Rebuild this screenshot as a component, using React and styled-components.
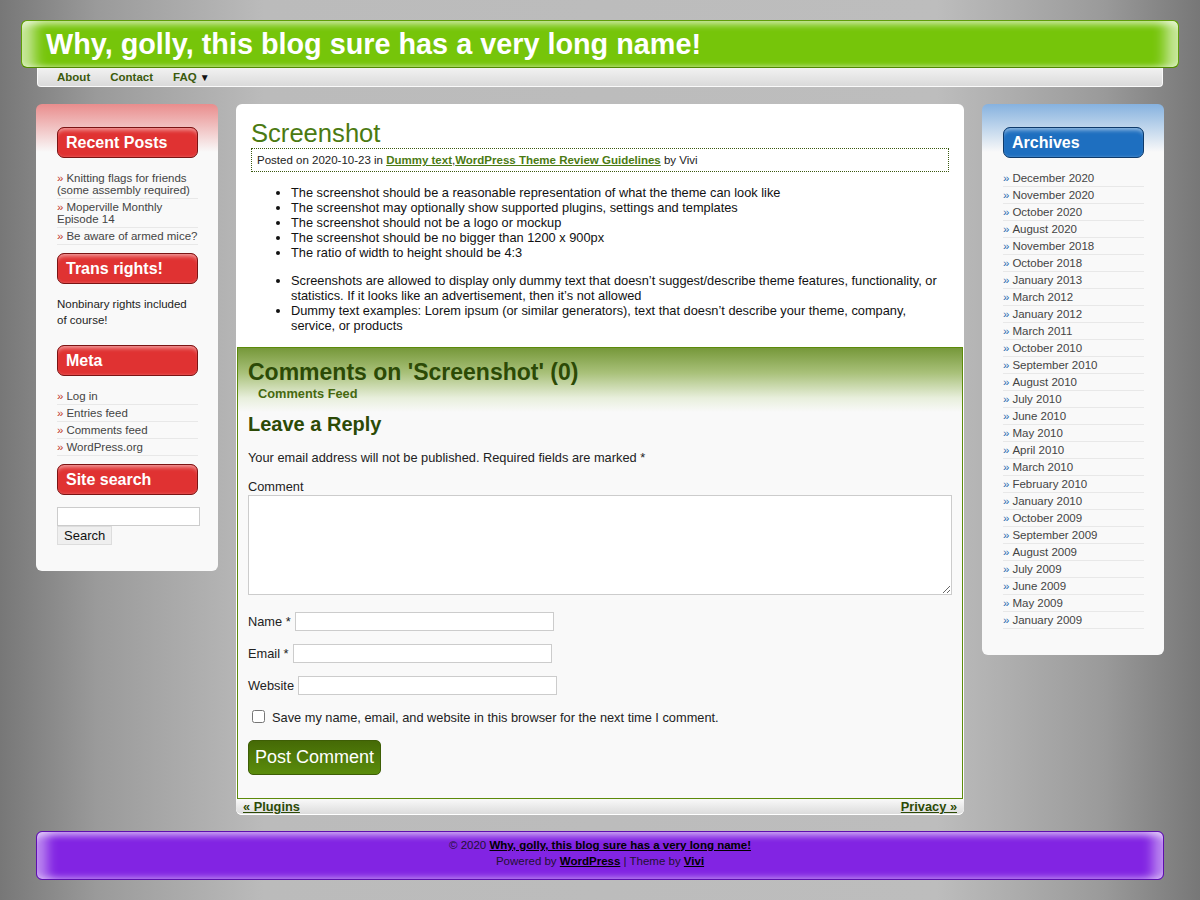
import React from "react";
import styled, { createGlobalStyle } from "styled-components";

const Global = createGlobalStyle`
  html, body { margin: 0; padding: 0; }
  body {
    font-family: "Liberation Sans", Arial, sans-serif;
    background: linear-gradient(to right, #777 0%, #9a9a9a 8%, #bbb 22%, #bdbdbd 78%, #9a9a9a 92%, #777 100%);
    min-height: 900px;
  }
`;

const Page = styled.div`
  width: 1128px;
  margin: 0 auto;
  padding-top: 20px;
`;

const Header = styled.header`
  margin: 0 -15px;
  height: 46px;
  background: #76c50a;
  border: 1px solid #5f9f08;
  border-bottom-color: #4f8a00;
  border-radius: 6px;
  box-shadow: inset 0 8px 6px -4px rgba(255,255,255,.55), inset 0 -4px 5px -3px rgba(255,255,255,.45),
    inset 22px 0 14px -10px rgba(255,255,255,.6), inset -22px 0 14px -10px rgba(255,255,255,.6);
  display: flex;
  align-items: center;
  padding-left: 24px;
`;

const SiteTitle = styled.h1`
  margin: 0;
  font-size: 28.8px;
  font-weight: bold;
  color: #fff;
`;

const Nav = styled.nav`
  margin: 0 1px;
  height: 19px;
  box-sizing: border-box;
  padding-bottom: 1px;
  background: linear-gradient(#f2f2f2, #dadada);
  border: 1px solid #fafafa;
  border-top: none;
  border-radius: 0 0 4px 4px;
  display: flex;
  align-items: center;
  gap: 20px;
  padding-left: 19px;
`;

const NavLink = styled.a`
  font-size: 11.5px;
  font-weight: bold;
  color: #3b5a0c;
  text-decoration: none;
`;

const Caret = styled.span`
  color: #111;
  font-size: 10px;
  margin-left: 3px;
`;

const Columns = styled.div`
  display: flex;
  align-items: flex-start;
  gap: 18px;
  margin-top: 17px;
`;

const Sidebar = styled.aside`
  width: 141px;
  padding: 23px 20px 18px 21px;
  border-radius: 6px;
  background: linear-gradient(${p => p.$tint} 0px, #f9f9f9 48px, #f9f9f9 100%);
`;

const Widget = styled.section`
  margin-bottom: 8px;
`;

const WidgetTitle = styled.h2`
  margin: 0 0 12px;
  height: 29px;
  line-height: 29px;
  padding-left: 8px;
  font-size: 16px;
  font-weight: bold;
  color: #fff;
  border-radius: 7px;
  border: 1px solid ${p => p.$dark};
  background: ${p => p.$color};
  box-shadow: inset 0 5px 4px -3px rgba(255,255,255,.55), inset 0 -2px 3px -2px rgba(255,255,255,.3);
`;

const List = styled.ul`
  list-style: none;
  margin: 0;
  padding: 0;
`;

const Item = styled.li`
  font-size: 11.5px;
  line-height: 12px;
  padding: 2px 0;
  border-bottom: 1px solid #e8e8e8;
  color: #444;
  &::before {
    content: "»";
    color: ${p => p.$mark};
    margin-right: 3px;
  }
`;

const Text = styled.p`
  margin: 0 0 17px;
  font-size: 11.5px;
  line-height: 16px;
  color: #222;
`;

const SearchForm = styled.form`
  display: flex;
  flex-direction: column;
  align-items: flex-start;
`;

const SearchInput = styled.input`
  box-sizing: border-box;
  width: 143px;
  height: 19px;
  border: 1px solid #ccc;
  background: #fff;
  margin: 0;
`;

const SearchButton = styled.button`
  font-family: "Liberation Sans", Arial, sans-serif;
  font-size: 13px;
  height: 19px;
  padding: 0 6px;
  background: #efefef;
  border: 1px solid #ddd;
  color: #111;
`;

const Main = styled.main`
  width: 728px;
  background: #fff;
  border-radius: 6px;
`;

const Post = styled.article`
  padding: 14px 15px 1px;
`;

const PostTitle = styled.h2`
  margin: 0;
  font-size: 25.6px;
  line-height: 30px;
  font-weight: normal;
  color: #4b7a12;
`;

const Meta = styled.div`
  border: 1px dotted #3a5a10;
  padding: 4px 5px;
  font-size: 11.5px;
  line-height: 14px;
  color: #222;
`;

const MetaLink = styled.a`
  font-weight: bold;
  color: #4b7a12;
  text-decoration: underline;
`;

const Bullets = styled.ul`
  margin: 13px 0;
  padding-left: 40px;
  font-size: 12.8px;
  line-height: 15px;
  color: #111;
`;

const Comments = styled.section`
  margin: 0 1px;
  border: 1px solid #5c8a0a;
  background: linear-gradient(#76983a 0px, #a9c17a 25px, #e8efdc 50px, #f9f9f9 64px, #f9f9f9 100%);
  padding: 10px 10px 23px;
`;

const CommentsTitle = styled.h2`
  margin: 0;
  font-size: 23px;
  line-height: 28px;
  font-weight: bold;
  color: #2c4a06;
`;

const FeedLink = styled.a`
  display: block;
  margin-left: 10px;
  font-size: 12.8px;
  font-weight: bold;
  color: #46690f;
  line-height: 16px;
  text-decoration: none;
`;

const ReplyTitle = styled.h3`
  margin: 9px 0 0;
  font-size: 20px;
  line-height: 26px;
  font-weight: bold;
  color: #2c4a06;
`;

const Para = styled.p`
  margin: 13px 0 0;
  font-size: 12.8px;
  line-height: 16px;
  color: #222;
`;

const CommentBlock = styled.div`
  margin-top: 13px;
`;

const Label = styled.label`
  display: block;
  font-size: 12.8px;
  line-height: 16px;
  color: #222;
`;

const TextArea = styled.textarea`
  display: block;
  box-sizing: border-box;
  width: 704px;
  height: 100px;
  border: 1px solid #ccc;
  background: #fff;
  margin: 0;
  resize: vertical;
`;

const Field = styled.div`
  display: flex;
  align-items: center;
  gap: 4px;
  margin-top: ${p => p.$top}px;
  font-size: 12.8px;
  color: #222;
`;

const TextInput = styled.input`
  box-sizing: border-box;
  width: 259px;
  height: 19px;
  border: 1px solid #ccc;
  background: #fff;
  margin: 0;
`;

const CheckRow = styled.div`
  display: flex;
  align-items: center;
  margin-top: 15px;
  font-size: 12.8px;
  color: #222;
`;

const Check = styled.input`
  margin: 0 7px 2px 4px;
  width: 13px;
  height: 13px;
`;

const PostButton = styled.button`
  margin-top: 15px;
  font-family: "Liberation Sans", Arial, sans-serif;
  font-size: 18px;
  color: #fff;
  height: 35px;
  padding: 0 6px;
  border: 1px solid #3e5e06;
  border-radius: 5px;
  background: linear-gradient(#456a06, #5a8c0c);
`;

const PostNav = styled.div`
  display: flex;
  justify-content: space-between;
  padding: 0 7px;
  height: 15px;
  line-height: 15px;
  background: linear-gradient(#f9f9f9, #dcdcdc);
  border-radius: 0 0 6px 6px;
  border-bottom: 1px solid #fff;
`;

const NavPostLink = styled.a`
  font-size: 12.8px;
  font-weight: bold;
  color: #2c4a06;
  text-decoration: underline;
`;

const Footer = styled.footer`
  margin-top: 16px;
  height: 47px;
  background: #8224e3;
  border: 1px solid #5e0fae;
  border-radius: 6px;
  box-shadow: inset 0 8px 6px -4px rgba(255,255,255,.55), inset 0 -6px 6px -4px rgba(255,255,255,.4),
    inset 18px 0 12px -8px rgba(255,255,255,.45), inset -18px 0 12px -8px rgba(255,255,255,.45);
  display: flex;
  flex-direction: column;
  align-items: center;
  justify-content: flex-start;
  font-size: 11.5px;
  line-height: 16px;
  color: #221133;
`;

const FooterLine = styled.div`
  &:first-child { margin-top: 5px; }
`;

const FootLink = styled.a`
  font-weight: bold;
  color: #000;
  text-decoration: underline;
`;

const recent = [
  "Knitting flags for friends (some assembly required)",
  "Moperville Monthly Episode 14",
  "Be aware of armed mice?",
];
const meta = ["Log in", "Entries feed", "Comments feed", "WordPress.org"];
const archives = [
  "December 2020", "November 2020", "October 2020", "August 2020", "November 2018",
  "October 2018", "January 2013", "March 2012", "January 2012", "March 2011",
  "October 2010", "September 2010", "August 2010", "July 2010", "June 2010",
  "May 2010", "April 2010", "March 2010", "February 2010", "January 2010",
  "October 2009", "September 2009", "August 2009", "July 2009", "June 2009",
  "May 2009", "January 2009",
];

const red = { $color: "#e03232", $dark: "#7a1414" };

export default function App() {
  return (
    <>
      <Global />
      <Page>
        <Header>
          <SiteTitle>Why, golly, this blog sure has a very long name!</SiteTitle>
        </Header>
        <Nav>
          <NavLink href="#">About</NavLink>
          <NavLink href="#">Contact</NavLink>
          <NavLink href="#">FAQ<Caret>▼</Caret></NavLink>
        </Nav>
        <Columns>
          <Sidebar $tint="#e98d8d">
            <Widget>
              <WidgetTitle {...red}>Recent Posts</WidgetTitle>
              <List>
                {recent.map(r => <Item key={r} $mark="#c0392b">{r}</Item>)}
              </List>
            </Widget>
            <Widget>
              <WidgetTitle {...red}>Trans rights!</WidgetTitle>
              <Text>Nonbinary rights included of course!</Text>
            </Widget>
            <Widget>
              <WidgetTitle {...red}>Meta</WidgetTitle>
              <List>
                {meta.map(r => <Item key={r} $mark="#c0392b">{r}</Item>)}
              </List>
            </Widget>
            <Widget>
              <WidgetTitle {...red}>Site search</WidgetTitle>
              <SearchForm onSubmit={e => e.preventDefault()}>
                <SearchInput type="text" />
                <SearchButton type="submit">Search</SearchButton>
              </SearchForm>
            </Widget>
          </Sidebar>

          <Main>
            <Post>
              <PostTitle>Screenshot</PostTitle>
              <Meta>
                Posted on 2020-10-23 in <MetaLink href="#">Dummy text</MetaLink>,<MetaLink href="#">WordPress Theme Review Guidelines</MetaLink> by Vivi
              </Meta>
              <Bullets>
                <li>The screenshot should be a reasonable representation of what the theme can look like</li>
                <li>The screenshot may optionally show supported plugins, settings and templates</li>
                <li>The screenshot should not be a logo or mockup</li>
                <li>The screenshot should be no bigger than 1200 x 900px</li>
                <li>The ratio of width to height should be 4:3</li>
              </Bullets>
              <Bullets>
                <li>Screenshots are allowed to display only dummy text that doesn’t suggest/describe theme features, functionality, or statistics. If it looks like an advertisement, then it’s not allowed</li>
                <li>Dummy text examples: Lorem ipsum (or similar generators), text that doesn’t describe your theme, company, service, or products</li>
              </Bullets>
            </Post>
            <Comments>
              <CommentsTitle>Comments on 'Screenshot' (0)</CommentsTitle>
              <FeedLink href="#">Comments Feed</FeedLink>
              <ReplyTitle>Leave a Reply</ReplyTitle>
              <Para>Your email address will not be published. Required fields are marked *</Para>
              <CommentBlock>
                <Label>Comment</Label>
                <TextArea />
              </CommentBlock>
              <Field $top={17}>Name *<TextInput type="text" /></Field>
              <Field $top={13}>Email *<TextInput type="text" /></Field>
              <Field $top={13}>Website<TextInput type="text" /></Field>
              <CheckRow>
                <Check type="checkbox" />
                Save my name, email, and website in this browser for the next time I comment.
              </CheckRow>
              <PostButton type="button">Post Comment</PostButton>
            </Comments>
            <PostNav>
              <NavPostLink href="#">« Plugins</NavPostLink>
              <NavPostLink href="#">Privacy »</NavPostLink>
            </PostNav>
          </Main>

          <Sidebar $tint="#86b2df">
            <Widget>
              <WidgetTitle $color="#1e6fc0" $dark="#0e3a6a">Archives</WidgetTitle>
              <List>
                {archives.map(r => <Item key={r} $mark="#2a6bb0">{r}</Item>)}
              </List>
            </Widget>
          </Sidebar>
        </Columns>
        <Footer>
          <FooterLine>© 2020 <FootLink href="#">Why, golly, this blog sure has a very long name!</FootLink></FooterLine>
          <FooterLine>Powered by <FootLink href="#">WordPress</FootLink> | Theme by <FootLink href="#">Vivi</FootLink></FooterLine>
        </Footer>
      </Page>
    </>
  );
}
